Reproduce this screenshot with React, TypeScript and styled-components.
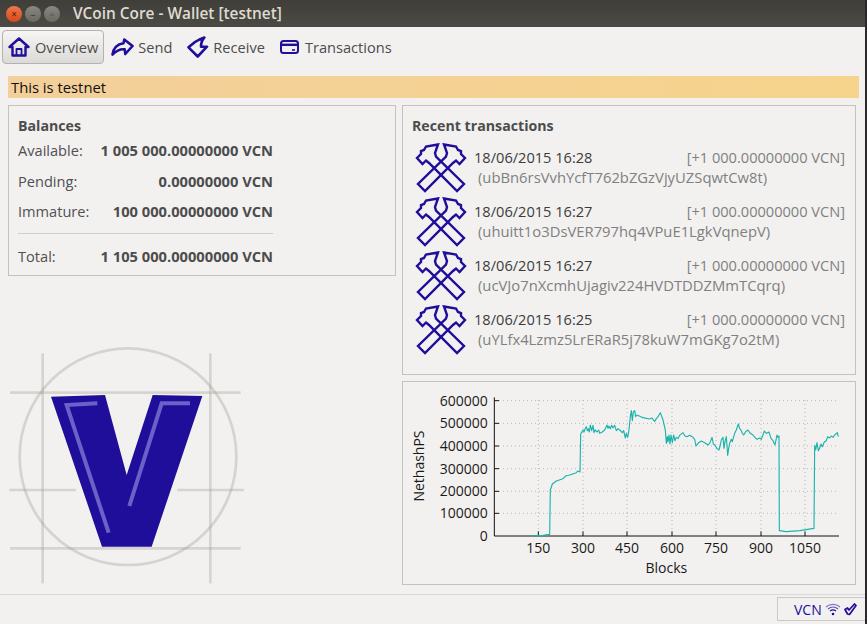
import styled, { createGlobalStyle } from 'styled-components';

const BLUE = '#1f0e9a';
const FONT = '"Open Sans", "Noto Sans", sans-serif';

const GlobalStyle = createGlobalStyle`
  html, body {
    margin: 0;
    padding: 0;
    background: #2b2a28;
    font-family: ${FONT};
    font-size: 14.6px;
    color: #3c3c3c;
  }
`;

const Screen = styled.div`
  display: flex;
  width: 867px;
  height: 624px;
  overflow: hidden;
`;

const Window = styled.div`
  display: flex;
  flex-direction: column;
  width: 865px;
  height: 624px;
  background: #f2f1f0;
`;

const TitleBar = styled.div`
  display: flex;
  align-items: center;
  height: 27px;
  flex: none;
  padding-left: 6px;
  background: linear-gradient(#3f3e39, #4c4a44);
`;

const WindowButton = styled.span<{ $close?: boolean }>`
  width: 16px;
  height: 16px;
  margin-right: 3px;
  border-radius: 50%;
  display: flex;
  align-items: center;
  justify-content: center;
  font-size: 10px;
  line-height: 1;
  color: ${(p) => (p.$close ? '#5a1d08' : '#3d3c38')};
  background: ${(p) => (p.$close ? 'linear-gradient(#f0784a, #d9481c)' : 'linear-gradient(#8a8880, #6a6860)')};
`;

const Title = styled.span`
  margin-left: 10px;
  font-weight: 600;
  font-size: 15.4px;
  color: #dfdbd2;
`;

const Toolbar = styled.div`
  display: flex;
  align-items: center;
  height: 34px;
  flex: none;
  padding: 3px 0 0 2px;
  margin-bottom: 12px;
`;

const ToolButton = styled.div<{ $active?: boolean }>`
  display: flex;
  align-items: center;
  gap: 4px;
  height: 34px;
  box-sizing: border-box;
  padding: 0 5px;
  margin-right: ${(p) => (p.$active ? 1 : 3)}px;
  font-size: 14.6px;
  color: #4c4c4c;
  border-radius: 4px;
  border: 1px solid ${(p) => (p.$active ? '#b4b2ae' : 'transparent')};
  background: ${(p) => (p.$active ? 'linear-gradient(#f6f5f4, #dcdad7)' : 'none')};
`;

const WarningBar = styled.div`
  flex: none;
  height: 22px;
  line-height: 22px;
  margin: 0 6px 7px 8px;
  padding-left: 3px;
  color: #111;
  font-size: 14.8px;
  background: linear-gradient(90deg, #f3cf9b, #f6d48c);
`;

const Content = styled.div`
  display: flex;
  flex: 1;
  gap: 6px;
  padding: 0 9px 0 8px;
`;

const LeftColumn = styled.div`
  display: flex;
  flex-direction: column;
  width: 388px;
`;

const RightColumn = styled.div`
  display: flex;
  flex-direction: column;
  gap: 6px;
  width: 454px;
`;

const Panel = styled.section`
  box-sizing: border-box;
  border: 1px solid #c4c2be;
`;

const BalancesPanel = styled(Panel)`
  height: 171px;
  padding: 10px 9px 0;
`;

const RecentPanel = styled(Panel)`
  height: 270px;
  padding: 10px 10px 0 9px;
`;

const ChartPanel = styled(Panel)`
  height: 204px;
  overflow: hidden;
`;

const PanelTitle = styled.h2`
  margin: 0;
  height: 20px;
  line-height: 20px;
  font-size: 14.2px;
  font-weight: 700;
  color: #4c4c4c;
`;

const BalanceList = styled.div`
  width: 255px;
`;

const BalanceRow = styled.div<{ $h: number }>`
  display: flex;
  justify-content: space-between;
  align-items: center;
  height: ${(p) => p.$h}px;
  color: #505050;
`;

const Amount = styled.span`
  font-weight: 700;
  font-size: 14.7px;
  color: #4c4c4c;
`;

const Rule = styled.div`
  height: 1px;
  margin: 10px 0 8px;
  background: #cfcdc9;
`;

const Logo = styled.svg`
  display: block;
  width: 242px;
  height: 250px;
  margin-top: 64px;
`;

const TxList = styled.div`
  display: flex;
  flex-direction: column;
  gap: 4px;
  margin-top: 7px;
`;

const TxRow = styled.div`
  display: flex;
  align-items: center;
  gap: 7px;
  height: 50px;
  padding-left: 3px;
`;

const TxBody = styled.div`
  flex: 1;
  display: flex;
  flex-direction: column;
  padding-bottom: 2px;
`;

const TxTop = styled.div`
  display: flex;
  justify-content: space-between;
  height: 20px;
  line-height: 20px;
`;

const TxDate = styled.span`
  color: #3c3c3c;
`;

const Muted = styled.span`
  color: #808080;
`;

const TxAddress = styled(Muted)`
  padding-left: 4px;
  font-size: 14.8px;
`;

const StatusBar = styled.div`
  flex: none;
  display: flex;
  justify-content: flex-end;
  height: 30px;
  box-sizing: border-box;
  border-top: 1px solid #dbd9d5;
  padding-top: 2px;
`;

const StatusBox = styled.div`
  display: flex;
  align-items: center;
  gap: 3px;
  box-sizing: border-box;
  width: 88px;
  height: 24px;
  padding-left: 16px;
  border: 1px solid #cbc9c5;
  border-right: none;
  color: ${BLUE};
  font-size: 14px;
`;

const HomeIcon = () => (
  <svg width="23" height="20" viewBox="0 0 23 20" fill="none" stroke={BLUE} strokeWidth="2.4" strokeLinejoin="round">
    <path d="M1.5 10 L11 1.5 L20.5 10 H17.5 V18.5 H4.5 V10 Z" />
    <path d="M8.5 18.5 V12 H13.5 V18.5" strokeWidth="1.8" />
  </svg>
);

const SendIcon = () => (
  <svg width="23" height="18" viewBox="0 0 23 18" fill="none" stroke={BLUE} strokeWidth="2.6" strokeLinejoin="round">
    <path d="M1.5 16.5 C2.5 10 7 6 12.5 5.2 L13.3 1.5 L21.5 8 L14.3 16 L13.7 11.3 C9 10.8 5 13 1.5 16.5 Z" />
  </svg>
);

const ReceiveIcon = () => (
  <svg width="22" height="22" viewBox="0 0 22 22" fill="none" stroke={BLUE} strokeWidth="2.6" strokeLinejoin="round">
    <path d="M17.3 1.5 C13 3 9.5 5 8 6 L1.5 11.3 L10.7 20.5 L20 10.7 H14 C14 7 15 4 17.3 1.5 Z" />
  </svg>
);

const CardIcon = () => (
  <svg width="21" height="14" viewBox="0 0 21 14" fill="none" stroke={BLUE} strokeWidth="2">
    <rect x="1" y="1" width="17" height="12" rx="2.5" />
    <path d="M1 4.8 H18" strokeWidth="2.4" />
    <path d="M12 10 H15" strokeWidth="1.6" />
  </svg>
);

const HammersIcon = () => (
  <svg width="52" height="50" viewBox="4 3 52 50" fill="none" stroke={BLUE} strokeWidth="2.4" strokeLinejoin="miter">
    <path d="M27 4.5 L15 6.5 L13 10 L10 11 L10 14 L6 18 L11.5 24 L15 20.5 L18 23 L46 51 L53 44 L25 16.5 L24 13 Z" />
    <path d="M33 4.5 L45 6.5 L47 10 L50 11 L50 14 L54 18 L48.5 24 L45 20.5 L42 23 L14 51 L7 44 L35 16.5 L36 13 Z" />
  </svg>
);

const WifiIcon = () => (
  <svg width="16" height="13" viewBox="0 0 16 13" fill="none" stroke={BLUE} strokeWidth="1.2">
    <path d="M1 4 C5 0.5 11 0.5 15 4" opacity="0.55" />
    <path d="M3 6 C6 3.6 10 3.6 13 6" opacity="0.7" />
    <path d="M5 8 C7 6.6 9 6.6 11 8" />
    <circle cx="8" cy="11" r="1.3" fill={BLUE} stroke="none" />
  </svg>
);

const CheckIcon = () => (
  <svg width="13" height="13" viewBox="0 0 13 13" fill="none" stroke={BLUE} strokeWidth="1.7" strokeLinejoin="round">
    <path d="M1 6.5 L3.5 5 L5 7 L10.5 1 L12 2.5 L5.5 11.5 L3.5 11 Z" />
  </svg>
);

const LogoMark = () => (
  <Logo viewBox="24 0 726 750">
    <circle cx="384" cy="350" r="325" fill="none" stroke="#d5d3cf" strokeWidth="8" />
    <g stroke="#9a968c" strokeOpacity="0.32" strokeWidth="8" fill="none">
      <path d="M128 40 V730" />
      <path d="M631 40 V730" />
      <path d="M30 158 H722" />
      <path d="M28 450 H228" />
      <path d="M532 450 H732" />
      <path d="M30 625 H722" />
    </g>
    <path d="M153 170 L315 165 L380 405 L458 165 L607 168 L455 620 L306 620 Z" fill="#1f0e9a" />
    <g stroke="#6c61c9" strokeWidth="12" fill="none">
      <path d="M292 190 L200 195 L326 578" />
      <path d="M570 190 L485 190 L388 498" />
    </g>
  </Logo>
);

// hash rate trace, read off the plot in 3x pixels
const hashTrace =
  '395,468 430,466 450,463 452,330 458,312 470,303 490,296 498,288 510,285 530,278 534,273 541,276 543,162 550,150 553,156 556,147 560,140 563,152 566,146 569,156 572,135 576,152 580,136 583,158 586,150 592,156 597,150 600,160 608,156 615,150 622,135 625,145 628,138 632,146 636,136 640,144 645,136 650,152 655,146 660,150 668,158 672,152 677,174 680,160 684,172 688,150 692,110 695,92 698,122 701,96 705,92 708,110 712,105 730,113 750,117 756,114 760,118 765,124 770,116 775,110 782,98 790,120 797,150 800,190 803,170 805,186 808,165 811,192 814,165 818,188 822,165 826,182 830,172 835,176 840,166 850,158 856,168 862,170 870,166 880,172 885,178 889,198 895,190 905,183 915,188 925,195 930,190 937,172 941,192 945,195 952,205 958,210 962,195 965,180 970,172 973,205 976,185 980,170 984,226 987,205 990,190 995,178 998,185 1005,160 1010,150 1016,132 1020,145 1024,150 1028,160 1032,165 1038,155 1045,150 1052,160 1060,165 1066,172 1072,178 1080,174 1085,178 1094,153 1100,160 1108,156 1114,175 1120,182 1126,195 1130,175 1132,165 1135,172 1138,168 1139,452 1160,455 1200,452 1243,445 1245,196 1248,210 1252,188 1256,212 1260,205 1264,192 1268,200 1274,186 1280,182 1284,170 1290,174 1295,168 1300,172 1305,165 1313,158 1316,170';

const yTicks = [
  { y: 62, label: '600000' },
  { y: 130, label: '500000' },
  { y: 198, label: '400000' },
  { y: 266, label: '300000' },
  { y: 334, label: '200000' },
  { y: 400, label: '100000' },
  { y: 468, label: '0' },
];

const xTicks = [
  { x: 416, label: '150' },
  { x: 550, label: '300' },
  { x: 682, label: '450' },
  { x: 817, label: '600' },
  { x: 949, label: '750' },
  { x: 1084, label: '900' },
  { x: 1216, label: '1050' },
];

const ChartSvg = styled.svg`
  display: block;
  width: 452px;
  height: 202px;
  font-family: ${FONT};
  font-size: 42px;
  fill: #1a1a1a;
`;

const HashChart = () => (
  <ChartSvg viewBox="10 6 1356 606">
    {yTicks.slice(0, 6).map((t) => (
      <path key={t.y} d={`M298 ${t.y} H1312`} stroke="#b9b7b3" strokeWidth="3" strokeDasharray="3 9" fill="none" />
    ))}
    {xTicks.map((t) => (
      <path key={t.x} d={`M${t.x} 60 V452`} stroke="#b9b7b3" strokeWidth="3" strokeDasharray="3 9" fill="none" />
    ))}
    <path d="M284 52 V468 H1318" stroke="#111" strokeWidth="3" fill="none" />
    {yTicks.slice(0, 6).map((t) => (
      <path key={t.y} d={`M284 ${t.y} H298`} stroke="#111" strokeWidth="3" />
    ))}
    {xTicks.map((t) => (
      <path key={t.x} d={`M${t.x} 468 V454`} stroke="#111" strokeWidth="3" />
    ))}
    {yTicks.map((t) => (
      <text key={t.y} x="264" y={t.y + 15} textAnchor="end">
        {t.label}
      </text>
    ))}
    {xTicks.map((t) => (
      <text key={t.x} x={t.x} y="520" textAnchor="middle">
        {t.label}
      </text>
    ))}
    <text x="800" y="578" textAnchor="middle">
      Blocks
    </text>
    <text transform="translate(72 258) rotate(-90)" textAnchor="middle">
      NethashPS
    </text>
    <polyline points={hashTrace} fill="none" stroke="#1ab3ab" strokeWidth="3.4" strokeLinejoin="round" />
  </ChartSvg>
);

const transactions = [
  { date: '18/06/2015 16:28', address: '(ubBn6rsVvhYcfT762bZGzVjyUZSqwtCw8t)' },
  { date: '18/06/2015 16:27', address: '(uhuitt1o3DsVER797hq4VPuE1LgkVqnepV)' },
  { date: '18/06/2015 16:27', address: '(ucVJo7nXcmhUjagiv224HVDTDDZMmTCqrq)' },
  { date: '18/06/2015 16:25', address: '(uYLfx4Lzmz5LrERaR5j78kuW7mGKg7o2tM)' },
];

export default function App() {
  return (
    <Screen>
      <GlobalStyle />
      <Window>
        <TitleBar>
          <WindowButton $close>×</WindowButton>
          <WindowButton>–</WindowButton>
          <WindowButton>▫</WindowButton>
          <Title>VCoin Core - Wallet [testnet]</Title>
        </TitleBar>
        <Toolbar>
          <ToolButton $active>
            <HomeIcon />
            Overview
          </ToolButton>
          <ToolButton>
            <SendIcon />
            Send
          </ToolButton>
          <ToolButton>
            <ReceiveIcon />
            Receive
          </ToolButton>
          <ToolButton>
            <CardIcon />
            Transactions
          </ToolButton>
        </Toolbar>
        <WarningBar>This is testnet</WarningBar>
        <Content>
          <LeftColumn>
            <BalancesPanel>
              <PanelTitle>Balances</PanelTitle>
              <BalanceList>
                <BalanceRow $h={27}>
                  <span>Available:</span>
                  <Amount>1 005 000.00000000 VCN</Amount>
                </BalanceRow>
                <BalanceRow $h={36}>
                  <span>Pending:</span>
                  <Amount>0.00000000 VCN</Amount>
                </BalanceRow>
                <BalanceRow $h={24}>
                  <span>Immature:</span>
                  <Amount>100 000.00000000 VCN</Amount>
                </BalanceRow>
                <Rule />
                <BalanceRow $h={28}>
                  <span>Total:</span>
                  <Amount>1 105 000.00000000 VCN</Amount>
                </BalanceRow>
              </BalanceList>
            </BalancesPanel>
            <LogoMark />
          </LeftColumn>
          <RightColumn>
            <RecentPanel>
              <PanelTitle>Recent transactions</PanelTitle>
              <TxList>
                {transactions.map((tx) => (
                  <TxRow key={tx.address}>
                    <HammersIcon />
                    <TxBody>
                      <TxTop>
                        <TxDate>{tx.date}</TxDate>
                        <Muted>[+1 000.00000000 VCN]</Muted>
                      </TxTop>
                      <TxAddress>{tx.address}</TxAddress>
                    </TxBody>
                  </TxRow>
                ))}
              </TxList>
            </RecentPanel>
            <ChartPanel>
              <HashChart />
            </ChartPanel>
          </RightColumn>
        </Content>
        <StatusBar>
          <StatusBox>
            VCN
            <WifiIcon />
            <CheckIcon />
          </StatusBox>
        </StatusBar>
      </Window>
    </Screen>
  );
}
